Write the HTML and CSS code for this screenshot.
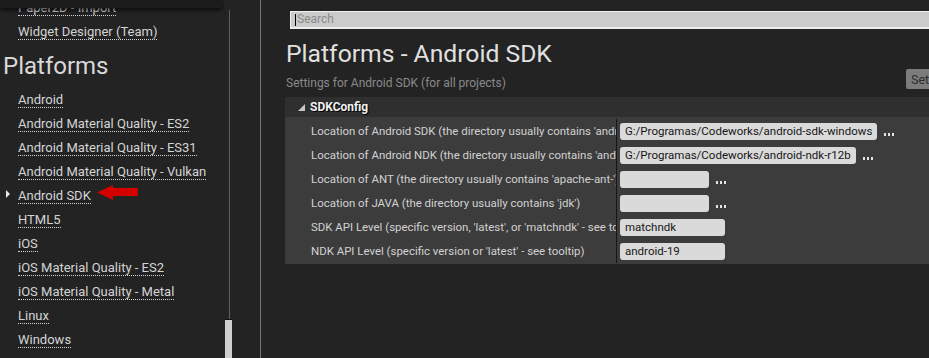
FILE: index.html
```html
<!DOCTYPE html>
<html lang="en">
<head>
  <meta charset="UTF-8">
  <title>Project Settings - Android SDK</title>
  <link rel="stylesheet" href="styles.css">
</head>
<body>

<div class="app">
  <aside class="sidebar">
    <div class="nav">
      <div class="topbar"></div>
      <div class="nav-items">
        <a class="link"><span>Paper2D - Import</span></a>
        <a class="link"><span>Widget Designer (Team)</span></a>
        <h2 class="section">Platforms</h2>
        <a class="link"><span>Android</span></a>
        <a class="link"><span>Android Material Quality - ES2</span></a>
        <a class="link"><span>Android Material Quality - ES31</span></a>
        <a class="link"><span>Android Material Quality - Vulkan</span></a>
        <a class="link active">
          <i class="marker"></i>
          <span>Android SDK</span>
          <svg class="red-arrow" width="41" height="15" viewBox="0 0 41 15">
            <polygon points="0,7.5 16,0 16,3 41,3 41,11 16,11 16,15" fill="#d40000"/>
          </svg>
        </a>
        <a class="link"><span>HTML5</span></a>
        <a class="link"><span>iOS</span></a>
        <a class="link"><span>iOS Material Quality - ES2</span></a>
        <a class="link"><span>iOS Material Quality - Metal</span></a>
        <a class="link"><span>Linux</span></a>
        <a class="link"><span>Windows</span></a>
      </div>
    </div>
    <div class="scroll">
      <div class="track"></div>
      <div class="thumb"></div>
    </div>
  </aside>

  <main class="main">
    <div class="search"><i class="caret"></i>Search</div>

    <div class="content">
      <h1 class="title">Platforms - Android SDK</h1>
      <div class="sub-row">
        <p class="subtitle">Settings for Android SDK (for all projects)</p>
        <button class="btn-default">Set as Default</button>
      </div>

      <div class="panel">
        <div class="panel-head">
          <svg width="7" height="7" viewBox="0 0 7 7"><polygon points="7,0 7,7 0,7" fill="#c8c8c8"/></svg>
          <span>SDKConfig</span>
        </div>
        <div class="rows">
          <div class="row">
            <div class="name">Location of Android SDK (the directory usually contains 'android-sdk-')</div>
            <div class="value"><span class="box">G:/Programas/Codeworks/android-sdk-windows</span><i class="dots"></i></div>
          </div>
          <div class="row">
            <div class="name">Location of Android NDK (the directory usually contains 'android-ndk-')</div>
            <div class="value"><span class="box">G:/Programas/Codeworks/android-ndk-r12b</span><i class="dots"></i></div>
          </div>
          <div class="row">
            <div class="name">Location of ANT (the directory usually contains 'apache-ant-')</div>
            <div class="value"><span class="box empty"></span><i class="dots"></i></div>
          </div>
          <div class="row">
            <div class="name">Location of JAVA (the directory usually contains 'jdk')</div>
            <div class="value"><span class="box empty"></span><i class="dots"></i></div>
          </div>
          <div class="row">
            <div class="name">SDK API Level (specific version, 'latest', or 'matchndk' - see tooltip)</div>
            <div class="value"><span class="box short">matchndk</span></div>
          </div>
          <div class="row">
            <div class="name">NDK API Level (specific version or 'latest' - see tooltip)</div>
            <div class="value"><span class="box short">android-19</span></div>
          </div>
        </div>
      </div>
    </div>
  </main>
</div>

</body>
</html>
```

FILE: styles.css
```css
body {
  margin: 0;
  background-color: #232323;
  font-family: Roboto, "Liberation Sans", sans-serif;
  overflow: hidden;
}
.app {
  display: flex;
  height: 358px;
}

/* left list */
.sidebar {
  width: 260px;
  flex-shrink: 0;
  display: flex;
  border-right: 1px solid #727272;
}
.nav {
  width: 225px;
  position: relative;
  overflow: hidden;
}
.topbar {
  position: absolute;
  top: 0;
  left: 0;
  width: 222px;
  height: 8px;
  background-color: #1c1c1c;
  box-shadow: 0 2px 4px rgba(0, 0, 0, 0.7);
  z-index: 1;
}
.nav-items {
  margin-top: -3px;
}
.link {
  display: block;
  position: relative;
  height: 24px;
  padding-left: 18px;
}
.link span {
  display: inline-block;
  font-size: 13px;
  line-height: 14px;
  color: #d4d4d4;
  border-bottom: 1px dotted #d4d4d4;
}
.section {
  margin: 0;
  height: 44px;
  line-height: 42px;
  padding-left: 3px;
  font-size: 24px;
  font-weight: normal;
  color: #d8d8d8;
}
.marker {
  position: absolute;
  left: 6px;
  top: 5px;
  width: 0;
  height: 0;
  border-top: 4px solid transparent;
  border-bottom: 4px solid transparent;
  border-left: 4px solid #e8e8e8;
}
.red-arrow {
  position: absolute;
  left: 97px;
  top: 0;
}
.scroll {
  width: 7px;
  display: flex;
  flex-direction: column;
  padding-top: 10px;
}
.track {
  flex: 1;
  width: 1px;
  margin-left: 4px;
  background-color: #5e5e5e;
}
.thumb {
  height: 38px;
  background-color: #cfcfcf;
  border-top: 1px solid #111;
}

/* main area */
.main {
  flex: 1;
  overflow: hidden;
  padding-left: 25px;
}
.search {
  margin: 11px 0 0 4px;
  width: 700px;
  height: 15px;
  border: 1px solid #eeeeee;
  border-bottom-width: 2px;
  background-color: #cbcbcb;
  font-size: 12px;
  line-height: 15px;
  color: #8a8a8a;
  display: flex;
  align-items: center;
}
.caret {
  width: 1px;
  height: 12px;
  margin: 0 1px 0 4px;
  background-color: #000;
}
.content {
  width: 704px;
}
.title {
  margin: 10px 0 0;
  font-size: 24.7px;
  line-height: 29px;
  font-weight: normal;
  color: #e0e0e0;
}
.sub-row {
  display: flex;
  height: 20px;
  margin-top: 1px;
}
.subtitle {
  flex: 1;
  margin: 0;
  padding-top: 7px;
  font-size: 12px;
  line-height: 14px;
  color: #8a8a8a;
}
.btn-default {
  width: 84px;
  height: 20px;
  padding: 0 5px;
  border: none;
  border-radius: 2px 0 0 2px;
  background-color: #7c7c7c;
  color: #2c2c2c;
  font-family: inherit;
  font-size: 12.5px;
  text-align: left;
  white-space: nowrap;
}

/* SDKConfig panel */
.panel {
  margin-top: 8px;
  margin-left: -1px;
}
.panel-head {
  height: 20px;
  display: flex;
  align-items: center;
  gap: 5px;
  padding-left: 13px;
  background-color: #2f2f2f;
}
.panel-head svg {
  margin-top: 1px;
}
.panel-head span {
  font-size: 12px;
  font-weight: bold;
  color: #f0f0f0;
  text-shadow: 1px 1px 0 #000;
}
.rows {
  padding: 2px 0 1px;
  background-color: #3c3c3c;
}
.row {
  display: flex;
  height: 24px;
}
.name {
  width: 305px;
  padding-left: 26px;
  border-right: 1px solid #161616;
  overflow: hidden;
  white-space: nowrap;
  font-size: 11.45px;
  line-height: 24px;
  color: #d2d2d2;
}
.value {
  display: flex;
  align-items: flex-start;
  padding-left: 3px;
}
.box {
  margin-top: 4px;
  height: 17px;
  padding: 0 5px;
  border-radius: 3px;
  background-color: #dadada;
  color: #161616;
  font-size: 11.5px;
  line-height: 17px;
  white-space: nowrap;
}
.box.empty {
  width: 79px;
}
.box.short {
  width: 95px;
}
.dots {
  width: 11px;
  height: 3px;
  margin: 14px 0 0 6px;
  background: radial-gradient(circle, #e4e4e4 1.2px, transparent 1.5px) 0 0 / 4px 3px repeat-x;
}
```
